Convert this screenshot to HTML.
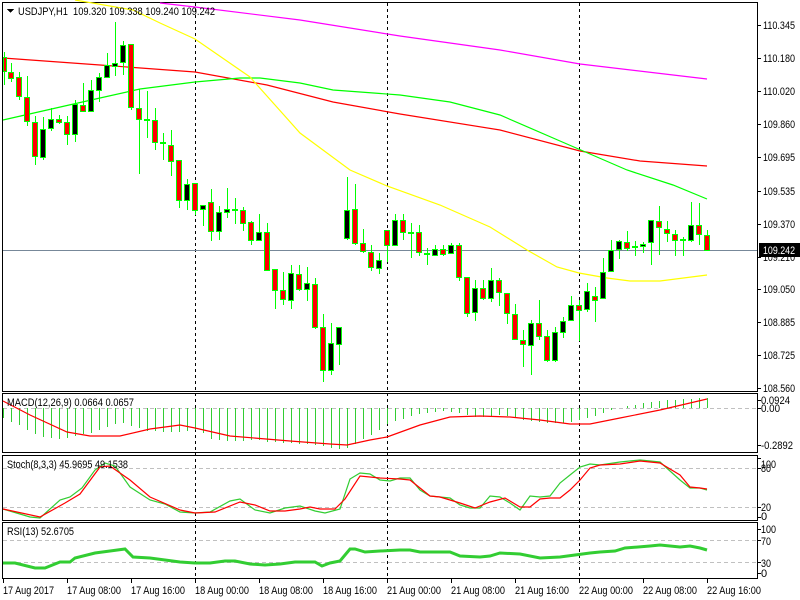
<!DOCTYPE html>
<html><head><meta charset="utf-8"><style>
html,body{margin:0;padding:0;background:#fff;width:800px;height:600px;overflow:hidden}
svg{display:block}
text{font-family:"Liberation Sans",sans-serif;font-size:11px;fill:#000}
</style></head><body>
<svg width="800" height="600" viewBox="0 0 800 600" xmlns="http://www.w3.org/2000/svg" shape-rendering="crispEdges">
<rect width="800" height="600" fill="#fff"/>
<g fill="none" stroke="#000" stroke-width="1">
<rect x="2.5" y="2.5" width="755" height="389"/>
<rect x="2.5" y="393.5" width="755" height="59"/>
<rect x="2.5" y="455.5" width="755" height="65"/>
<rect x="2.5" y="522.5" width="755" height="56"/>
</g>
<g stroke="#000" stroke-dasharray="3,3" stroke-width="1">
<line x1="195.5" y1="3" x2="195.5" y2="578"/>
<line x1="387.5" y1="3" x2="387.5" y2="578"/>
<line x1="579.5" y1="3" x2="579.5" y2="578"/>
</g>
<g stroke="#c0c0c0" stroke-dasharray="4,3">
<line x1="3" y1="408.5" x2="757" y2="408.5"/>
<line x1="3" y1="468.5" x2="757" y2="468.5"/>
<line x1="3" y1="507.5" x2="757" y2="507.5"/>
<line x1="3" y1="540.5" x2="757" y2="540.5"/>
<line x1="3" y1="562.5" x2="757" y2="562.5"/>
</g>
<line x1="3" y1="250.5" x2="757" y2="250.5" stroke="#778899"/>
<g fill="none" stroke-width="1.2" shape-rendering="auto">
<polyline stroke="#ff00ff" points="160,3 195,7 300,20 400,36 500,50 580,64 707,79"/>
<polyline stroke="#ff0000" points="3,58 100,65 195,72 267,85 333,102 400,114 500,130 580,151 640,161 707,166"/>
<polyline stroke="#00ff00" points="3,120 100,98 140,89 195,82 240,78 260,78 300,83 333,90 400,95 450,102 500,115 560,141 627,170 673,185 707,199"/>
<polyline stroke="#ffff00" points="75,0 133,10 160,23 195,39 250,77 300,133 350,170 387,186 440,205 490,227 527,250 557,267 579,273 607,278 630,281 660,281 707,275"/>
</g>
<g stroke="#00ff00">
<line x1="4.5" y1="52" x2="4.5" y2="85"/><rect x="3.5" y="57.5" width="3" height="14" fill="#ff0000"/>
<line x1="11.5" y1="63" x2="11.5" y2="82"/><rect x="8.5" y="72.5" width="5" height="6" fill="#ff0000"/>
<line x1="19.5" y1="72" x2="19.5" y2="100"/><rect x="16.5" y="77.5" width="5" height="19" fill="#ff0000"/>
<line x1="27.5" y1="76" x2="27.5" y2="126"/><rect x="24.5" y="97.5" width="5" height="24" fill="#ff0000"/>
<line x1="35.5" y1="116" x2="35.5" y2="165"/><rect x="32.5" y="122.5" width="5" height="34" fill="#ff0000"/>
<line x1="43.5" y1="117" x2="43.5" y2="160"/><rect x="40.5" y="129.5" width="5" height="28" fill="#000"/>
<line x1="51.5" y1="108" x2="51.5" y2="131"/><rect x="48.5" y="119.5" width="5" height="9" fill="#000"/>
<line x1="59.5" y1="115" x2="59.5" y2="124"/><rect x="56.5" y="119.5" width="5" height="3" fill="#ff0000"/>
<line x1="67.5" y1="116" x2="67.5" y2="145"/><rect x="64.5" y="122.5" width="5" height="12" fill="#ff0000"/>
<line x1="75.5" y1="100" x2="75.5" y2="142"/><rect x="72.5" y="104.5" width="5" height="30" fill="#000"/>
<line x1="83.5" y1="83" x2="83.5" y2="112"/><rect x="80.5" y="105.5" width="5" height="6" fill="#ff0000"/>
<line x1="91.5" y1="80" x2="91.5" y2="112"/><rect x="88.5" y="90.5" width="5" height="21" fill="#000"/>
<line x1="99.5" y1="73" x2="99.5" y2="102"/><rect x="96.5" y="77.5" width="5" height="13" fill="#000"/>
<line x1="107.5" y1="53" x2="107.5" y2="76"/><rect x="104.5" y="65.5" width="5" height="12" fill="#000"/>
<line x1="115.5" y1="22" x2="115.5" y2="76"/><rect x="112.5" y="63.5" width="5" height="3" fill="#000"/>
<line x1="123.5" y1="41" x2="123.5" y2="75"/><rect x="120.5" y="45.5" width="5" height="17" fill="#000"/>
<line x1="131.5" y1="44" x2="131.5" y2="110"/><rect x="128.5" y="44.5" width="5" height="63" fill="#ff0000"/>
<line x1="139.5" y1="89" x2="139.5" y2="174"/><rect x="136.5" y="108.5" width="5" height="11" fill="#ff0000"/>
<line x1="147.5" y1="91" x2="147.5" y2="138"/><rect x="144.5" y="119.5" width="5" height="1" fill="#ff0000"/>
<line x1="155.5" y1="108" x2="155.5" y2="150"/><rect x="152.5" y="120.5" width="5" height="22" fill="#ff0000"/>
<line x1="163.5" y1="133" x2="163.5" y2="160"/><rect x="160.5" y="142.5" width="5" height="1" fill="#ff0000"/>
<line x1="171.5" y1="130" x2="171.5" y2="176"/><rect x="168.5" y="145.5" width="5" height="16" fill="#ff0000"/>
<line x1="179.5" y1="160" x2="179.5" y2="208"/><rect x="176.5" y="160.5" width="5" height="40" fill="#ff0000"/>
<line x1="187.5" y1="179" x2="187.5" y2="210"/><rect x="184.5" y="184.5" width="5" height="16" fill="#000"/>
<line x1="195.5" y1="183" x2="195.5" y2="215"/><rect x="192.5" y="183.5" width="5" height="27" fill="#ff0000"/>
<line x1="203.5" y1="205" x2="203.5" y2="226"/><rect x="200.5" y="205.5" width="5" height="4" fill="#000"/>
<line x1="211.5" y1="189" x2="211.5" y2="241"/><rect x="208.5" y="202.5" width="5" height="29" fill="#ff0000"/>
<line x1="219.5" y1="206" x2="219.5" y2="240"/><rect x="216.5" y="212.5" width="5" height="19" fill="#000"/>
<line x1="227.5" y1="188" x2="227.5" y2="218"/><rect x="224.5" y="209.5" width="5" height="3" fill="#000"/>
<line x1="235.5" y1="198" x2="235.5" y2="224"/><rect x="232.5" y="209.5" width="5" height="1" fill="#ff0000"/>
<line x1="243.5" y1="207" x2="243.5" y2="231"/><rect x="240.5" y="210.5" width="5" height="13" fill="#ff0000"/>
<line x1="251.5" y1="221" x2="251.5" y2="245"/><rect x="248.5" y="222.5" width="5" height="18" fill="#ff0000"/>
<line x1="259.5" y1="214" x2="259.5" y2="240"/><rect x="256.5" y="232.5" width="5" height="8" fill="#000"/>
<line x1="267.5" y1="223" x2="267.5" y2="271"/><rect x="264.5" y="232.5" width="5" height="38" fill="#ff0000"/>
<line x1="275.5" y1="269" x2="275.5" y2="309"/><rect x="272.5" y="269.5" width="5" height="21" fill="#ff0000"/>
<line x1="283.5" y1="272" x2="283.5" y2="305"/><rect x="280.5" y="290.5" width="5" height="9" fill="#ff0000"/>
<line x1="291.5" y1="265" x2="291.5" y2="309"/><rect x="288.5" y="273.5" width="5" height="27" fill="#000"/>
<line x1="299.5" y1="265" x2="299.5" y2="291"/><rect x="296.5" y="274.5" width="5" height="15" fill="#ff0000"/>
<line x1="307.5" y1="267" x2="307.5" y2="301"/><rect x="304.5" y="283.5" width="5" height="6" fill="#000"/>
<line x1="315.5" y1="278" x2="315.5" y2="329"/><rect x="312.5" y="284.5" width="5" height="43" fill="#ff0000"/>
<line x1="323.5" y1="314" x2="323.5" y2="382"/><rect x="320.5" y="327.5" width="5" height="43" fill="#ff0000"/>
<line x1="331.5" y1="323" x2="331.5" y2="375"/><rect x="328.5" y="343.5" width="5" height="27" fill="#000"/>
<line x1="339.5" y1="327" x2="339.5" y2="365"/><rect x="336.5" y="327.5" width="5" height="17" fill="#000"/>
<line x1="347.5" y1="177" x2="347.5" y2="240"/><rect x="344.5" y="210.5" width="5" height="28" fill="#000"/>
<line x1="355.5" y1="184" x2="355.5" y2="245"/><rect x="352.5" y="209.5" width="5" height="34" fill="#ff0000"/>
<line x1="363.5" y1="229" x2="363.5" y2="253"/><rect x="360.5" y="243.5" width="5" height="8" fill="#ff0000"/>
<line x1="371.5" y1="245" x2="371.5" y2="271"/><rect x="368.5" y="252.5" width="5" height="15" fill="#ff0000"/>
<line x1="379.5" y1="253" x2="379.5" y2="274"/><rect x="376.5" y="260.5" width="5" height="8" fill="#000"/>
<line x1="387.5" y1="230" x2="387.5" y2="262"/><rect x="384.5" y="230.5" width="5" height="15" fill="#ff0000"/>
<line x1="395.5" y1="214" x2="395.5" y2="246"/><rect x="392.5" y="220.5" width="5" height="25" fill="#000"/>
<line x1="403.5" y1="214" x2="403.5" y2="240"/><rect x="400.5" y="220.5" width="5" height="12" fill="#ff0000"/>
<line x1="411.5" y1="223" x2="411.5" y2="258"/><rect x="408.5" y="232.5" width="5" height="1" fill="#ff0000"/>
<line x1="419.5" y1="225" x2="419.5" y2="256"/><rect x="416.5" y="232.5" width="5" height="20" fill="#ff0000"/>
<line x1="427.5" y1="248" x2="427.5" y2="265"/><rect x="424.5" y="253.5" width="5" height="1" fill="#ff0000"/>
<line x1="435.5" y1="245" x2="435.5" y2="256"/><rect x="432.5" y="249.5" width="5" height="6" fill="#000"/>
<line x1="443.5" y1="245" x2="443.5" y2="256"/><rect x="440.5" y="249.5" width="5" height="5" fill="#ff0000"/>
<line x1="451.5" y1="243" x2="451.5" y2="254"/><rect x="448.5" y="245.5" width="5" height="8" fill="#000"/>
<line x1="459.5" y1="243" x2="459.5" y2="281"/><rect x="456.5" y="245.5" width="5" height="32" fill="#ff0000"/>
<line x1="467.5" y1="277" x2="467.5" y2="317"/><rect x="464.5" y="277.5" width="5" height="36" fill="#ff0000"/>
<line x1="475.5" y1="280" x2="475.5" y2="321"/><rect x="472.5" y="288.5" width="5" height="24" fill="#000"/>
<line x1="483.5" y1="280" x2="483.5" y2="300"/><rect x="480.5" y="288.5" width="5" height="10" fill="#ff0000"/>
<line x1="491.5" y1="268" x2="491.5" y2="302"/><rect x="488.5" y="280.5" width="5" height="18" fill="#000"/>
<line x1="499.5" y1="278" x2="499.5" y2="306"/><rect x="496.5" y="280.5" width="5" height="12" fill="#ff0000"/>
<line x1="507.5" y1="293" x2="507.5" y2="324"/><rect x="504.5" y="293.5" width="5" height="20" fill="#ff0000"/>
<line x1="515.5" y1="304" x2="515.5" y2="340"/><rect x="512.5" y="314.5" width="5" height="25" fill="#ff0000"/>
<line x1="523.5" y1="330" x2="523.5" y2="367"/><rect x="520.5" y="340.5" width="5" height="4" fill="#ff0000"/>
<line x1="531.5" y1="320" x2="531.5" y2="375"/><rect x="528.5" y="323.5" width="5" height="22" fill="#000"/>
<line x1="539.5" y1="300" x2="539.5" y2="340"/><rect x="536.5" y="323.5" width="5" height="13" fill="#ff0000"/>
<line x1="547.5" y1="330" x2="547.5" y2="362"/><rect x="544.5" y="336.5" width="5" height="24" fill="#ff0000"/>
<line x1="555.5" y1="327" x2="555.5" y2="362"/><rect x="552.5" y="332.5" width="5" height="28" fill="#000"/>
<line x1="563.5" y1="317" x2="563.5" y2="338"/><rect x="560.5" y="321.5" width="5" height="11" fill="#000"/>
<line x1="571.5" y1="296" x2="571.5" y2="320"/><rect x="568.5" y="305.5" width="5" height="15" fill="#000"/>
<line x1="579.5" y1="300" x2="579.5" y2="341"/><rect x="576.5" y="305.5" width="5" height="5" fill="#ff0000"/>
<line x1="587.5" y1="283" x2="587.5" y2="312"/><rect x="584.5" y="291.5" width="5" height="18" fill="#000"/>
<line x1="595.5" y1="287" x2="595.5" y2="322"/><rect x="592.5" y="296.5" width="5" height="4" fill="#ff0000"/>
<line x1="603.5" y1="258" x2="603.5" y2="298"/><rect x="600.5" y="272.5" width="5" height="26" fill="#000"/>
<line x1="611.5" y1="240" x2="611.5" y2="271"/><rect x="608.5" y="250.5" width="5" height="21" fill="#000"/>
<line x1="619.5" y1="240" x2="619.5" y2="259"/><rect x="616.5" y="241.5" width="5" height="8" fill="#000"/>
<line x1="627.5" y1="231" x2="627.5" y2="251"/><rect x="624.5" y="242.5" width="5" height="6" fill="#ff0000"/>
<line x1="635.5" y1="241" x2="635.5" y2="256"/><rect x="632.5" y="246.5" width="5" height="1" fill="#ff0000"/>
<line x1="643.5" y1="242" x2="643.5" y2="253"/><rect x="640.5" y="244.5" width="5" height="2" fill="#000"/>
<line x1="651.5" y1="220" x2="651.5" y2="265"/><rect x="648.5" y="220.5" width="5" height="22" fill="#000"/>
<line x1="659.5" y1="206" x2="659.5" y2="255"/><rect x="656.5" y="221.5" width="5" height="6" fill="#ff0000"/>
<line x1="667.5" y1="221" x2="667.5" y2="242"/><rect x="664.5" y="229.5" width="5" height="4" fill="#ff0000"/>
<line x1="675.5" y1="230" x2="675.5" y2="256"/><rect x="672.5" y="234.5" width="5" height="6" fill="#ff0000"/>
<line x1="683.5" y1="237" x2="683.5" y2="256"/><rect x="680.5" y="239.5" width="5" height="1" fill="#ff0000"/>
<line x1="691.5" y1="202" x2="691.5" y2="242"/><rect x="688.5" y="225.5" width="5" height="15" fill="#000"/>
<line x1="699.5" y1="203" x2="699.5" y2="245"/><rect x="696.5" y="225.5" width="5" height="9" fill="#ff0000"/>
<line x1="707.5" y1="230" x2="707.5" y2="251"/><rect x="704.5" y="235.5" width="5" height="15" fill="#ff0000"/>
</g>
<path stroke="#32cd32" fill="none" d="M3.5 408V418M11.5 408V422M19.5 408V425M27.5 408V430M35.5 408V434M43.5 408V437M51.5 408V438M59.5 408V439M67.5 408V438M75.5 408V436M83.5 408V434M91.5 408V433M99.5 408V430M107.5 408V427M115.5 408V424M123.5 408V423M131.5 408V426M139.5 408V428M147.5 408V431M155.5 408V431M163.5 408V432M171.5 408V432M179.5 408V432M187.5 408V431M195.5 408V430M203.5 408V433M211.5 408V439M219.5 408V440M227.5 408V441M235.5 408V441M243.5 408V441M251.5 408V440M259.5 408V440M267.5 408V442M275.5 408V442M283.5 408V443M291.5 408V443M299.5 408V444M307.5 408V444M315.5 408V445M323.5 408V446M331.5 408V448M339.5 408V449M347.5 408V448M355.5 408V444M363.5 408V439M371.5 408V435M379.5 408V430M387.5 408V424M395.5 408V421M403.5 408V419M411.5 408V416M419.5 408V414M427.5 408V413M435.5 408V412M443.5 408V411M451.5 408V412M459.5 408V413M467.5 408V415M475.5 408V417M483.5 408V417M491.5 408V416M499.5 408V415M507.5 408V416M515.5 408V418M523.5 408V420M531.5 408V421M539.5 408V422M547.5 408V423M555.5 408V423M563.5 408V423M571.5 408V422M579.5 408V420M587.5 408V418M595.5 408V416M603.5 408V413M611.5 408V410M627.5 408V406M635.5 408V405M643.5 408V403M651.5 408V402M659.5 408V401M667.5 408V400M675.5 408V400M683.5 408V399M691.5 408V399M699.5 408V398M707.5 408V398"/>
<g fill="none" stroke-width="1.2" shape-rendering="auto">
<polyline stroke="#ff0000" points="3,401 30,415 67,432 90,436 120,436 150,429 180,425 195,428 230,436 290,441 330,444 347,445 370,440 387,437 420,425 450,417 480,416 510,417 540,420 570,424 590,424 620,418 660,410 690,403 707,399"/>
<polyline stroke="#32cd32" points="3,509 30,517 40,518 60,500 70,497 82,488 95,470 105,463 115,466 130,487 150,500 165,504 180,512 195,513 210,512 230,501 240,499 255,510 270,513 285,508 300,506 315,511 325,513 340,509 350,479 360,473 370,474 380,480 390,481 400,478 410,478 420,490 430,496 440,497 450,498 460,505 470,508 480,508 490,496 500,497 510,503 520,510 530,496 540,497 550,496 560,483 570,475 580,467 590,464 600,465 620,462 640,460 660,462 680,480 690,488 700,488 707,490"/>
<polyline stroke="#ff0000" points="3,509 40,517 65,503 80,494 100,467 110,466 130,480 150,497 180,510 195,513 215,512 240,502 255,505 270,511 285,511 300,509 310,507 320,509 335,509 345,499 360,476 380,478 400,479 410,480 430,496 440,497 460,503 475,508 490,502 505,498 520,507 530,507 540,499 550,498 560,498 570,490 580,480 590,468 600,465 620,464 640,461 660,463 680,475 690,487 700,488 707,489"/>
<polyline stroke="#32cd32" stroke-width="3" points="3,563 15,563 35,568 45,568 60,562 70,562 75,558 95,553 110,551 125,549 133,557 150,558 165,560 180,562 195,563 210,563 225,561 235,561 250,564 265,565 280,564 295,562 315,562 322,566 330,563 340,561 350,549 355,549 365,552 380,551 400,550 410,550 420,552 450,552 460,556 480,557 490,556 500,553 520,554 540,558 560,557 575,555 590,553 600,552 615,551 625,548 650,546 660,545 680,547 690,546 700,548 707,550"/>
</g>
<path stroke="#000" d="M757 25.5h4M757 58.5h4M757 91.5h4M757 124.5h4M757 157.5h4M757 191.5h4M757 224.5h4M757 257.5h4M757 289.5h4M757 322.5h4M757 355.5h4M757 388.5h4M757 400.5h4M757 408.5h4M757 445.5h4M757 458.5h4M757 468.5h4M757 507.5h4M757 517.5h4M757 529.5h4M757 540.5h4M757 562.5h4M757 573.5h4"/>
<g lengthAdjust="spacingAndGlyphs">
<text x="763" y="29" textLength="32" lengthAdjust="spacingAndGlyphs">110.345</text><text x="763" y="62" textLength="32" lengthAdjust="spacingAndGlyphs">110.180</text><text x="763" y="95" textLength="32" lengthAdjust="spacingAndGlyphs">110.020</text><text x="763" y="128" textLength="32" lengthAdjust="spacingAndGlyphs">109.860</text><text x="763" y="161" textLength="32" lengthAdjust="spacingAndGlyphs">109.695</text><text x="763" y="195" textLength="32" lengthAdjust="spacingAndGlyphs">109.535</text><text x="763" y="228" textLength="32" lengthAdjust="spacingAndGlyphs">109.370</text><text x="763" y="261" textLength="32" lengthAdjust="spacingAndGlyphs">109.210</text><text x="763" y="293" textLength="32" lengthAdjust="spacingAndGlyphs">109.050</text><text x="763" y="326" textLength="32" lengthAdjust="spacingAndGlyphs">108.885</text><text x="763" y="359" textLength="32" lengthAdjust="spacingAndGlyphs">108.725</text><text x="763" y="392" textLength="32" lengthAdjust="spacingAndGlyphs">108.560</text>
<text x="761" y="404" textLength="29" lengthAdjust="spacingAndGlyphs">0.0924</text><text x="761" y="412" textLength="19" lengthAdjust="spacingAndGlyphs">0.00</text><text x="761" y="449" textLength="32" lengthAdjust="spacingAndGlyphs">-0.2892</text>
<text x="761" y="468" textLength="15" lengthAdjust="spacingAndGlyphs">100</text><text x="761" y="472" textLength="10" lengthAdjust="spacingAndGlyphs">80</text><text x="761" y="511" textLength="10" lengthAdjust="spacingAndGlyphs">20</text><text x="761" y="520">0</text>
<text x="761" y="533" textLength="15" lengthAdjust="spacingAndGlyphs">100</text><text x="761" y="545" textLength="10" lengthAdjust="spacingAndGlyphs">70</text><text x="761" y="567" textLength="10" lengthAdjust="spacingAndGlyphs">30</text><text x="761" y="577">0</text>
</g>
<rect x="759" y="243" width="41" height="14" fill="#000"/>
<text x="763" y="254" style="fill:#fff" textLength="32" lengthAdjust="spacingAndGlyphs">109.242</text>
<path d="M7 9h7l-3.5 4z" fill="#000"/>
<text x="18" y="15" textLength="197" lengthAdjust="spacingAndGlyphs" xml:space="preserve">USDJPY,H1  109.320 109.338 109.240 109.242</text>
<text x="7" y="406" textLength="127" lengthAdjust="spacingAndGlyphs">MACD(12,26,9) 0.0664 0.0657</text>
<text x="7" y="468" textLength="121" lengthAdjust="spacingAndGlyphs">Stoch(8,3,3) 45.9695 49.1538</text>
<text x="7" y="535" textLength="67" lengthAdjust="spacingAndGlyphs">RSI(13) 52.6705</text>
<path stroke="#000" d="M3.5 579v4M67.5 579v4M131.5 579v4M195.5 579v4M259.5 579v4M323.5 579v4M387.5 579v4M451.5 579v4M515.5 579v4M579.5 579v4M643.5 579v4M707.5 579v4"/>
<g>
<text x="3" y="594" textLength="51" lengthAdjust="spacingAndGlyphs">17 Aug 2017</text><text x="67" y="594" textLength="54" lengthAdjust="spacingAndGlyphs">17 Aug 08:00</text><text x="131" y="594" textLength="54" lengthAdjust="spacingAndGlyphs">17 Aug 16:00</text><text x="195" y="594" textLength="54" lengthAdjust="spacingAndGlyphs">18 Aug 00:00</text><text x="259" y="594" textLength="54" lengthAdjust="spacingAndGlyphs">18 Aug 08:00</text><text x="323" y="594" textLength="54" lengthAdjust="spacingAndGlyphs">18 Aug 16:00</text><text x="387" y="594" textLength="54" lengthAdjust="spacingAndGlyphs">21 Aug 00:00</text><text x="451" y="594" textLength="54" lengthAdjust="spacingAndGlyphs">21 Aug 08:00</text><text x="515" y="594" textLength="54" lengthAdjust="spacingAndGlyphs">21 Aug 16:00</text><text x="579" y="594" textLength="54" lengthAdjust="spacingAndGlyphs">22 Aug 00:00</text><text x="643" y="594" textLength="54" lengthAdjust="spacingAndGlyphs">22 Aug 08:00</text><text x="707" y="594" textLength="54" lengthAdjust="spacingAndGlyphs">22 Aug 16:00</text>
</g>
</svg>
</body></html>
